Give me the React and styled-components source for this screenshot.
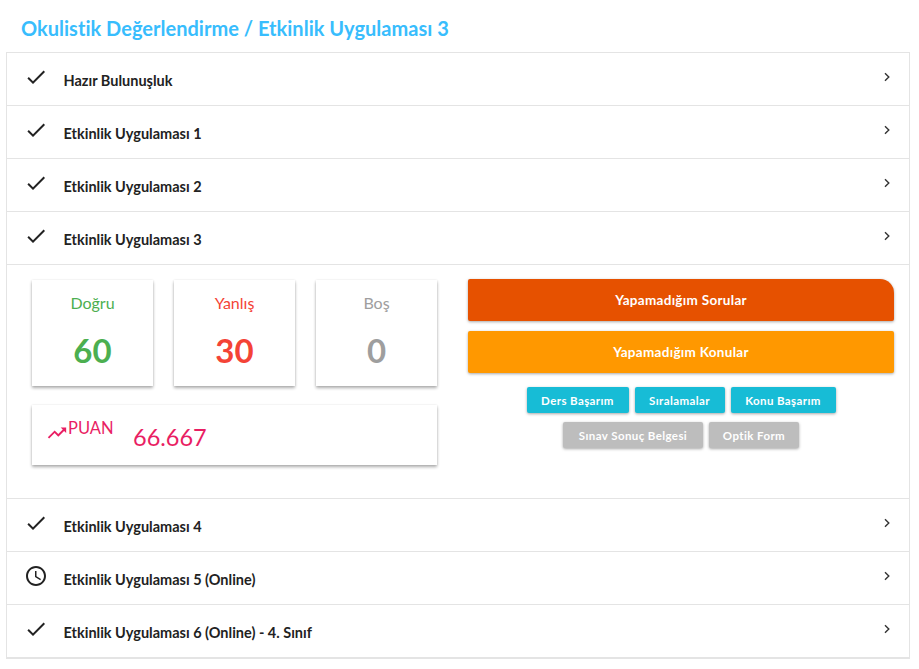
import React from 'react';
import styled, { createGlobalStyle } from 'styled-components';

const Global = createGlobalStyle`
  html, body { margin: 0; padding: 0; background: #fff; }
  body { font-family: "Lato", "Noto Sans", "Liberation Sans", sans-serif; }
`;
const Page = styled.div`
  width: 919px; height: 669px; box-sizing: border-box; padding: 16px 9px 0 6px; overflow: hidden;
`;
const Title = styled.h1`
  margin: 0 0 11px 15px; height: 25px; line-height: 25px; font-size: 20px; font-weight: 700; letter-spacing: .02px; color: #38bdfd;
`;
const Panel = styled.div`
  border: 1px solid #e4e4e4; border-bottom-width: 2px;
`;
const Row = styled.div`
  height: 52px; display: flex; align-items: center; padding-right: 16px;
  & + & { border-top: 1px solid #e4e4e4; }
`;
const Lead = styled.span`
  width: 57px; padding-left: 17px; box-sizing: border-box; height: 52px; display: flex; align-items: center; flex: none;
  svg { margin-top: -5px; }
`;
const RowLabel = styled.span`
  flex: 1; font-size: 14.5px; font-weight: 700; color: #222; padding-top: 2px; margin-left: -0.5px;
`;
const Chevron = styled.svg`
  width: 12px; height: 12px; margin-top: -4px; flex: none;
`;
const Body = styled.div`
  height: 235px; box-sizing: border-box; border-top: 1px solid #e4e4e4; border-bottom: 1px solid #e4e4e4;
  padding: 14px 14px 0 25px; display: grid; grid-template-columns: 405px 426px; column-gap: 31px; align-content: start;
`;
const Stats = styled.div`
  display: grid; grid-template-columns: repeat(3, 121px); column-gap: 21px; row-gap: 19px; padding-top: 1px;
`;
const Card = styled.div`
  height: 106px; box-sizing: border-box; background: #fff; text-align: center; color: ${p => p.$c};
  box-shadow: 0 2px 3px rgba(0,0,0,.32), 0 0 2px rgba(0,0,0,.08);
  padding-top: 13px;
`;
const CardLabel = styled.div`
  font-size: 16px; line-height: 20px;
`;
const CardValue = styled.div`
  font-size: 33px; font-weight: 700; line-height: 40px; margin-top: 17px;
`;
const Score = styled.div`
  grid-column: 1 / -1; height: 60px; box-sizing: border-box; display: flex; align-items: flex-start; color: #e91e63;
  box-shadow: 0 2px 3px rgba(0,0,0,.32), 0 0 2px rgba(0,0,0,.08); padding: 13px 0 0 14px;
`;
const ScoreLabel = styled.span`
  display: flex; align-items: flex-start; font-size: 16.5px; line-height: 20px; width: 87px; flex: none;
  svg { margin-top: 4px; }
`;
const ScoreValue = styled.span`
  font-size: 23.5px; line-height: 30px; margin-top: 4px;
`;
const Actions = styled.div`
  display: flex; flex-direction: column; align-items: stretch;
`;
const BigButton = styled.div`
  height: 42px; margin-bottom: 10px; display: flex; align-items: center; justify-content: center; color: #fff;
  font-size: 13.5px; font-weight: 700; letter-spacing: .3px; padding-bottom: 1px; box-sizing: border-box;
  background: ${p => p.$bg}; border-radius: ${p => p.$r};
  box-shadow: 0 1px 3px rgba(0,0,0,.35);
`;
const SmallGroup = styled.div`
  display: flex; flex-direction: column; gap: 9px; padding-top: 4px;
`;
const SmallRow = styled.div`
  display: flex; justify-content: center; gap: 6px;
`;
const SmallButton = styled.div`
  height: 26px; width: ${p => p.$w}px; display: flex; align-items: center; justify-content: center; color: #fff;
  font-size: 11.5px; font-weight: 700; letter-spacing: .4px; background: ${p => p.$bg}; border-radius: 2px;
  box-shadow: 0 1px 3px rgba(0,0,0,.35);
`;

const Check = () => (
  <svg width="24" height="24" viewBox="0 0 24 24" fill="#222"><path d="M9 16.17 4.83 12l-1.42 1.41L9 19 21 7l-1.41-1.41z" /></svg>
);
const Clock = () => (
  <svg width="24" height="24" viewBox="0 0 24 24" fill="#222"><path d="M11.99 2C6.47 2 2 6.48 2 12s4.47 10 9.99 10C17.52 22 22 17.52 22 12S17.52 2 11.99 2zM12 20c-4.42 0-8-3.58-8-8s3.58-8 8-8 8 3.58 8 8-3.58 8-8 8zm.5-13H11v6l5.25 3.15.75-1.23-4.5-2.67z" /></svg>
);
const Trend = () => (
  <svg width="22" height="22" viewBox="0 0 24 24" fill="currentColor"><path d="m16 6 2.29 2.29-4.88 4.88-4-4L2 16.59 3.41 18l6-6 4 4 6.3-6.29L22 12V6z" /></svg>
);
const Item = ({ label, clock }) => (
  <Row>
    <Lead>{clock ? <Clock /> : <Check />}</Lead>
    <RowLabel>{label}</RowLabel>
    <Chevron viewBox="0 0 12 12"><path d="M4 2.2 7.8 6 4 9.8" fill="none" stroke="#333" strokeWidth="1.4" /></Chevron>
  </Row>
);

export default function App() {
  return (
    <Page>
      <Global />
      <Title>Okulistik Değerlendirme / Etkinlik Uygulaması 3</Title>
      <Panel>
        <Item label="Hazır Bulunuşluk" />
        <Item label="Etkinlik Uygulaması 1" />
        <Item label="Etkinlik Uygulaması 2" />
        <Item label="Etkinlik Uygulaması 3" />
        <Body>
          <Stats>
            <Card $c="#4caf50"><CardLabel>Doğru</CardLabel><CardValue>60</CardValue></Card>
            <Card $c="#f44336"><CardLabel>Yanlış</CardLabel><CardValue>30</CardValue></Card>
            <Card $c="#9e9e9e"><CardLabel>Boş</CardLabel><CardValue>0</CardValue></Card>
            <Score>
              <ScoreLabel><Trend />PUAN</ScoreLabel>
              <ScoreValue>66.667</ScoreValue>
            </Score>
          </Stats>
          <Actions>
            <BigButton $bg="#e65100" $r="2px 14px 2px 2px">Yapamadığım Sorular</BigButton>
            <BigButton $bg="#ff9800" $r="2px">Yapamadığım Konular</BigButton>
            <SmallGroup>
              <SmallRow>
                <SmallButton $bg="#17bcd6" $w={102}>Ders Başarım</SmallButton>
                <SmallButton $bg="#17bcd6" $w={90}>Sıralamalar</SmallButton>
                <SmallButton $bg="#17bcd6" $w={105}>Konu Başarım</SmallButton>
              </SmallRow>
              <SmallRow>
                <SmallButton $bg="#bdbdbd" $w={140}>Sınav Sonuç Belgesi</SmallButton>
                <SmallButton $bg="#bdbdbd" $w={90}>Optik Form</SmallButton>
              </SmallRow>
            </SmallGroup>
          </Actions>
        </Body>
        <Item label="Etkinlik Uygulaması 4" />
        <Item clock label="Etkinlik Uygulaması 5 (Online)" />
        <Item label="Etkinlik Uygulaması 6 (Online) - 4. Sınıf" />
      </Panel>
    </Page>
  );
}
